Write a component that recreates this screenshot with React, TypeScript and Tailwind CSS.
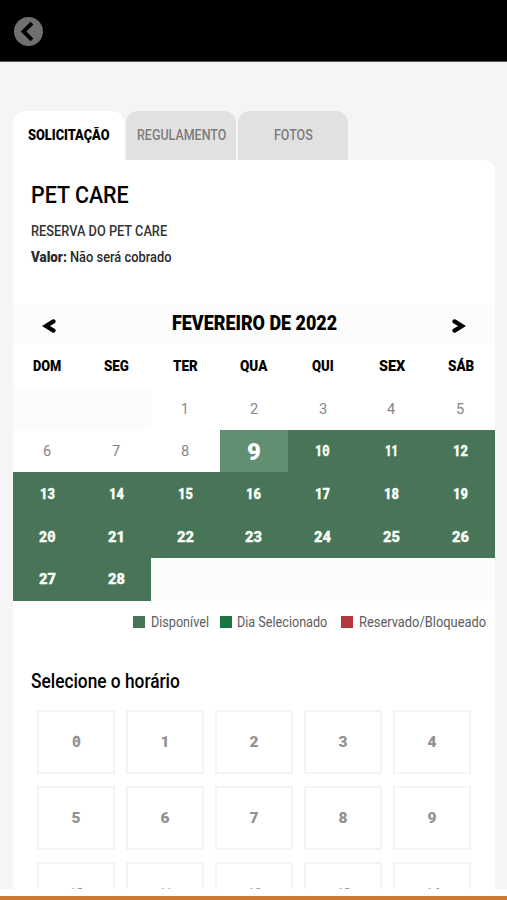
import React, { useLayoutEffect, useRef, useState } from 'react';

interface FitTextProps {
  width: number;
  children: React.ReactNode;
  className?: string;
}

// Squeezes a line of text into a fixed width, for the condensed look
const FitText: React.FC<FitTextProps> = ({ width, children, className = '' }) => {
  const ref = useRef<HTMLSpanElement>(null);
  const [scale, setScale] = useState<number>(1);

  useLayoutEffect(() => {
    if (ref.current) setScale(width / ref.current.offsetWidth);
  }, [width]);

  return (
    <span className={`block text-left whitespace-nowrap ${className}`} style={{ width }}>
      <span ref={ref} className="inline-block origin-left" style={{ transform: `scaleX(${scale})` }}>
        {children}
      </span>
    </span>
  );
};

// Bold numerals use a dotted zero
const Numerals: React.FC<{ text: string }> = ({ text }) => (
  <>
    {text.split('').map((char, index) =>
      char === '0' ? (
        <span
          key={index}
          className="font-['Liberation_Mono',monospace] text-[16.5px] leading-[0] [-webkit-text-stroke:0.3px_currentColor]"
        >
          0
        </span>
      ) : (
        <span key={index}>{char}</span>
      )
    )}
  </>
);

const weekDays = [
  { label: 'DOM', width: 28 },
  { label: 'SEG', width: 25 },
  { label: 'TER', width: 25 },
  { label: 'QUA', width: 27 },
  { label: 'QUI', width: 22 },
  { label: 'SEX', width: 26 },
  { label: 'SÁB', width: 26 },
];

const days: (number | null)[] = [
  null,
  null,
  ...Array.from({ length: 28 }, (_, i) => i + 1),
  null,
  null,
  null,
  null,
  null,
];

const slots = Array.from({ length: 15 }, (_, i) => i);

const numberWidth = (n: number) => {
  if (n < 10) return 9;
  if (n === 11) return 13;
  return n < 20 ? 15 : 17;
};

const Day: React.FC<{ day: number | null }> = ({ day }) => {
  if (day === null) return <div className="bg-[#fcfcfc]" />;
  if (day < 9) {
    return (
      <div className="flex items-center justify-center pt-[2px] text-[15.5px] text-[#868686]">
        <FitText width={day === 1 ? 8 : 8.5}>{day}</FitText>
      </div>
    );
  }
  if (day === 9) {
    return (
      <div className="flex items-center justify-center bg-[#618f71] pt-[2px] text-[24px] font-black text-white">
        <FitText width={14}>9</FitText>
      </div>
    );
  }
  return (
    <div className="flex items-center justify-center bg-[#487458] pt-[2px] text-[15.5px] font-black text-[#f8fff8] [-webkit-text-stroke:0.3px_currentColor]">
      <FitText width={numberWidth(day)}>
        <Numerals text={String(day)} />
      </FitText>
    </div>
  );
};

const App: React.FC = () => {
  return (
    <div className="flex h-[900px] w-[507px] flex-col overflow-hidden bg-white font-[Roboto,sans-serif] leading-none text-black">
      <header className="flex h-[62px] shrink-0 items-center border-b border-[#555] bg-black pt-[2px] pl-[14px]">
        <button className="flex size-[29px] items-center justify-center rounded-full bg-[#707070]">
          <svg width="29" height="29" viewBox="0 0 29 29" fill="none">
            <path d="M18 6.2 9.6 14.5l8.4 8.3" stroke="black" strokeWidth="4" />
          </svg>
        </button>
      </header>

      <main className="h-[827px] shrink-0 overflow-hidden bg-[#f5f5f5] pt-[49px] pl-[13px]">
        <nav className="flex h-[49px] gap-[2px] text-[15px]">
          <div className="flex w-[111px] items-center justify-center rounded-t-[12px] bg-white font-black">
            <FitText width={82}>SOLICITAÇÃO</FitText>
          </div>
          <div className="flex w-[110px] items-center justify-center rounded-t-[12px] bg-[#e1e1e1] font-medium text-[#7c7c7c]">
            <FitText width={89}>REGULAMENTO</FitText>
          </div>
          <div className="flex w-[110px] items-center justify-center rounded-t-[12px] bg-[#e1e1e1] font-medium text-[#7c7c7c]">
            <FitText width={39}>FOTOS</FitText>
          </div>
        </nav>

        <section className="flex h-[740px] w-[482px] flex-col rounded-tr-[10px] bg-white">
          <div className="flex h-[144px] shrink-0 flex-col pt-[23px] pl-[18px]">
            <h1 className="h-[41px] text-[24.5px] font-medium">
              <FitText width={98}>PET CARE</FitText>
            </h1>
            <p className="h-[27px] text-[15.5px] font-medium text-[#333]">
              <FitText width={136}>RESERVA DO PET CARE</FitText>
            </p>
            <p className="flex gap-[3px] text-[14.5px] text-[#2a2a2a]">
              <FitText width={36} className="font-black">Valor:</FitText>
              <FitText width={101} className="font-medium">Não será cobrado</FitText>
            </p>
          </div>

          <div className="flex h-[40px] shrink-0 items-center justify-between bg-[#fcfcfc] px-[29px]">
            <svg className="mt-[4px]" width="14" height="16" viewBox="0 0 14 16" fill="none">
              <path d="M11.5 3.4 4 8l7.5 4.6" stroke="black" strokeWidth="4.2" strokeLinecap="round" />
            </svg>
            <FitText width={165} className="-mt-[3px] text-[20px] font-black">
              FEVEREIRO DE 2022
            </FitText>
            <svg className="mt-[4px]" width="14" height="16" viewBox="0 0 14 16" fill="none">
              <path d="M2.5 3.4 10 8l-7.5 4.6" stroke="black" strokeWidth="4.2" strokeLinecap="round" />
            </svg>
          </div>

          <div className="grid h-[43px] shrink-0 grid-cols-7 pt-[2px] text-[15.5px] font-black">
            {weekDays.map((day) => (
              <div key={day.label} className="flex items-center justify-center">
                <FitText width={day.width}>{day.label}</FitText>
              </div>
            ))}
          </div>

          <div className="grid h-[213.5px] shrink-0 grid-cols-7 grid-rows-5">
            {days.map((day, index) => (
              <Day key={index} day={day} />
            ))}
          </div>

          <div className="flex h-[43px] shrink-0 items-center justify-end pr-[9px] text-[15px] text-[#5c5c5c]">
            <span className="mr-[6px] size-[12px] bg-[#487458]" />
            <FitText width={58} className="pt-px">Disponível</FitText>
            <span className="mr-[5px] ml-[11px] size-[12px] bg-[#1c7440]" />
            <FitText width={90} className="pt-px">Dia Selecionado</FitText>
            <span className="mr-[6px] ml-[14px] size-[12px] bg-[#b23a3e]" />
            <FitText width={127} className="pt-px">Reservado/Bloqueado</FitText>
          </div>

          <h2 className="mt-[28px] h-[38px] shrink-0 pl-[18px] text-[19.5px] font-medium">
            <FitText width={149}>Selecione o horário</FitText>
          </h2>

          <div className="grid shrink-0 grid-cols-[repeat(5,78px)] gap-x-[11px] gap-y-[12px] pl-[24px]">
            {slots.map((slot) => (
              <div
                key={slot}
                className="flex h-[64px] items-center justify-center border-2 border-[#f4f4f4] pt-[2px] text-[15.5px] font-black text-[#929292]"
              >
                <FitText width={numberWidth(slot)}>
                  <Numerals text={String(slot)} />
                </FitText>
              </div>
            ))}
          </div>
        </section>
      </main>

      <footer className="mt-auto h-[4px] bg-[#cc7a33]" />
    </div>
  );
};

export default App;
